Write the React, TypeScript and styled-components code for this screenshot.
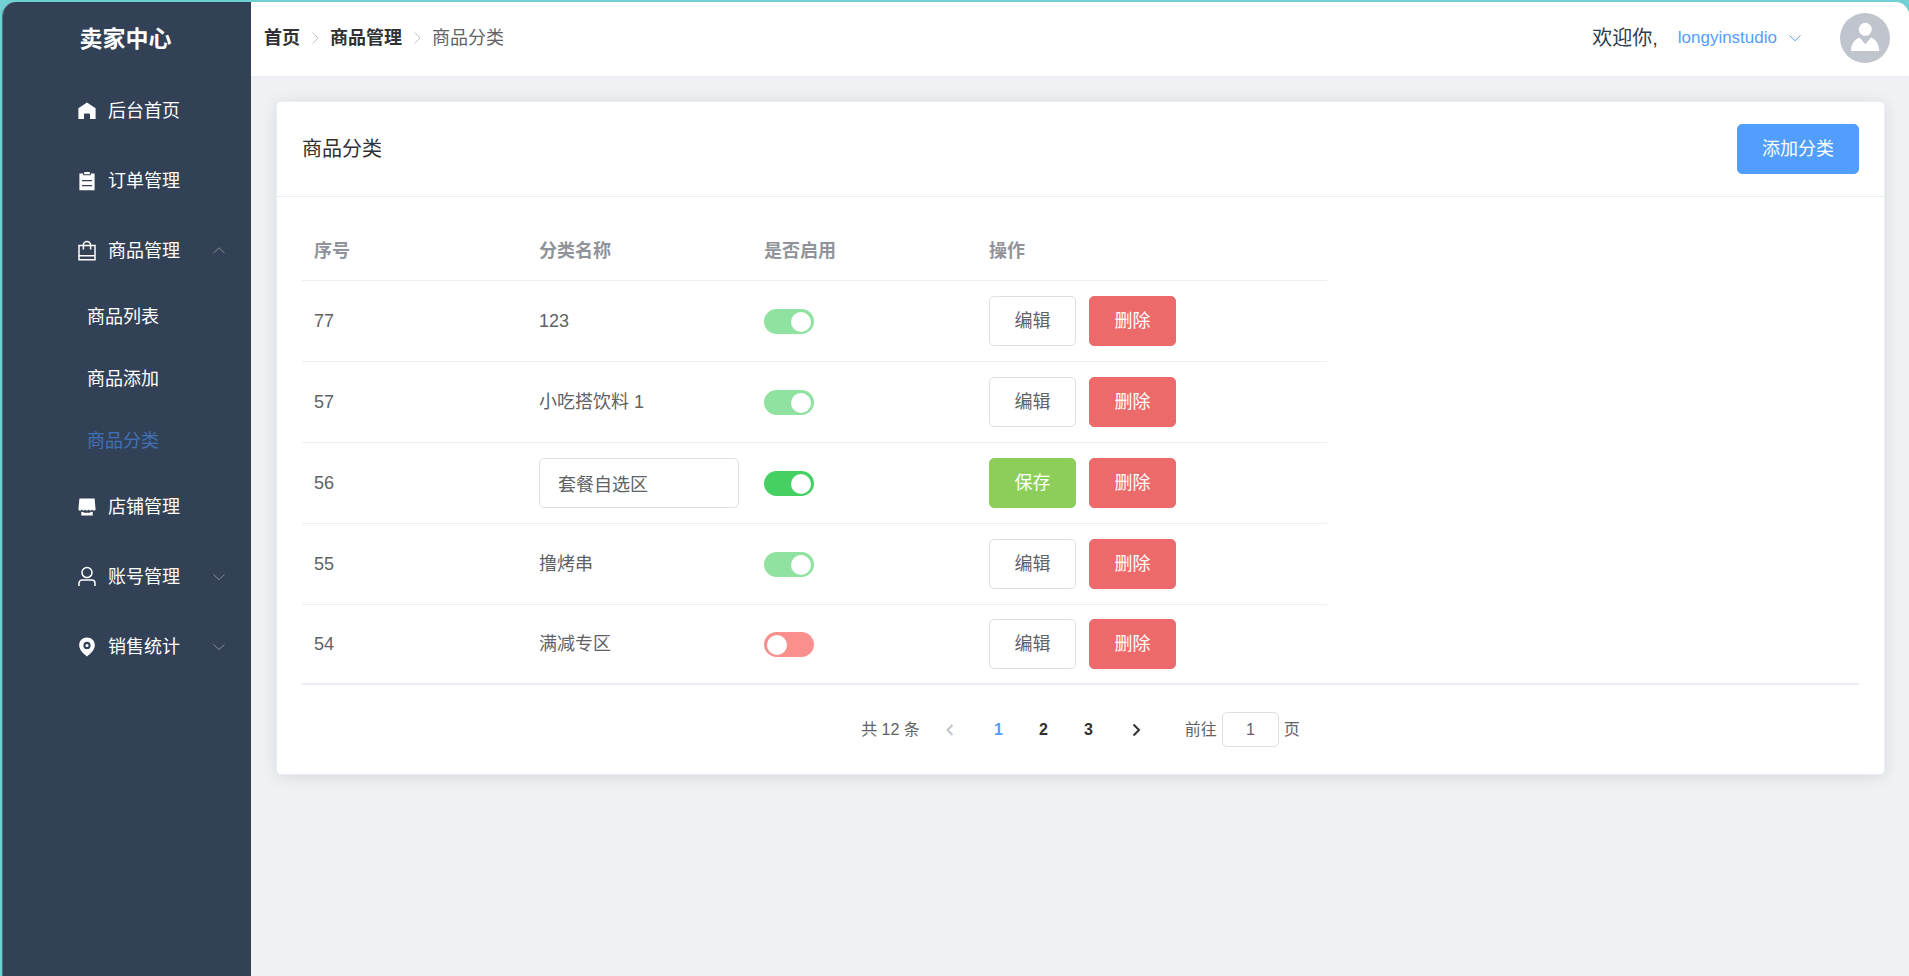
import React, { useState } from 'react';
import styled, { createGlobalStyle, css } from 'styled-components';

const GlobalStyle = createGlobalStyle`
  *, *::before, *::after { box-sizing: border-box; }
  body {
    margin: 0;
    background: #70d1d2;
    color: #303133;
    font-family: "Liberation Sans", "Noto Sans CJK SC", sans-serif;
    font-size: 18px;
    line-height: 24px;
  }
  button, input { font: inherit; }
  h1, h2, ul, ol { margin: 0; padding: 0; }
  ul, ol { list-style: none; }
  a { color: inherit; text-decoration: none; }
`;

const Desktop = styled.div`
  min-height: 100vh;
  padding: 2px 0 0 2px;
  display: flex;
`;

const AppWindow = styled.div`
  flex: 1;
  min-width: 0;
  display: flex;
  border-left: 1px solid #43707f;
  border-radius: 14px 14px 0 0;
  overflow: hidden;
  background: #f0f1f5;
`;

const Sidebar = styled.aside`
  flex: 0 0 248px;
  background: #334157;
  color: #fff;
`;

const Brand = styled.h1`
  height: 74px;
  padding-right: 3px;
  display: flex;
  align-items: center;
  justify-content: center;
  font-size: 23px;
`;

const menuRow = css`
  width: 100%;
  height: 70px;
  padding: 0 25px 0 72px;
  display: flex;
  align-items: center;
  gap: 9px;
  border: 0;
  background: none;
  color: #fff;
  cursor: pointer;
`;

const MenuLink = styled.a`
  ${menuRow}
`;

const MenuToggle = styled.button`
  ${menuRow}
`;

const MenuLabel = styled.span`
  flex: 1;
  text-align: left;
`;

const SubLink = styled.a<{ $active?: boolean }>`
  height: 62px;
  padding-left: 84px;
  display: flex;
  align-items: center;
  color: ${(p) => (p.$active ? '#3f71b5' : '#fff')};
`;

const Content = styled.div`
  flex: 1;
  min-width: 0;
`;

const TopBar = styled.header`
  height: 75px;
  padding: 0 19px 2px 13px;
  display: flex;
  align-items: center;
  justify-content: space-between;
  background: #fff;
  border-bottom: 1px solid #ebecf0;
`;

const Crumbs = styled.ol`
  display: flex;
  align-items: center;
`;

const Crumb = styled.li`
  display: flex;
  align-items: center;
  color: #606266;

  a {
    font-weight: 700;
    color: #303133;
  }

  svg {
    margin: 0 8px;
  }
`;

const UserArea = styled.div`
  display: flex;
  align-items: center;
`;

const Greeting = styled.span`
  font-size: 20px;
  color: #2c3e50;
  margin-right: 20px;
`;

const UserMenu = styled.button`
  padding: 0;
  margin-right: 38px;
  display: flex;
  align-items: center;
  gap: 11px;
  border: 0;
  background: none;
  color: #529eff;
  font-size: 17px;
  cursor: pointer;
`;

const Main = styled.main`
  padding: 24px 24px 24px 25px;
`;

const Card = styled.section`
  background: #fff;
  border: 1px solid #ebeef5;
  border-radius: 5px;
  box-shadow: 0 2px 15px rgba(0, 0, 0, 0.1);
`;

const CardHeader = styled.div`
  padding: 22px 25px;
  display: flex;
  align-items: center;
  justify-content: space-between;
  border-bottom: 1px solid #ebeef5;
`;

const CardTitle = styled.h2`
  font-size: 20px;
  font-weight: 400;
`;

const CardBody = styled.div`
  padding: 25px 25px 27px;
`;

const tones = {
  plain: ['#fff', '#dcdfe6', '#606266'],
  primary: ['#529eff', '#529eff', '#fff'],
  success: ['#8dce5b', '#8dce5b', '#fff'],
  danger: ['#ec6a6a', '#ec6a6a', '#fff'],
};

const Button = styled.button<{ $tone: keyof typeof tones }>`
  height: 50px;
  padding: 0 24px;
  background: ${(p) => tones[p.$tone][0]};
  border: 1px solid ${(p) => tones[p.$tone][1]};
  border-radius: 5px;
  color: ${(p) => tones[p.$tone][2]};
  cursor: pointer;
`;

const Table = styled.table`
  width: 1025px;
  max-width: 100%;
  table-layout: fixed;
  border-collapse: separate;
  border-spacing: 0;
  color: #606266;

  th, td {
    padding: 0 12px;
    text-align: left;
    border-bottom: 1px solid #ebeef5;
  }
  th {
    width: 225px;
    height: 59px;
    color: #909399;
  }
  th:last-child {
    width: 350px;
  }
  td {
    height: 81px;
  }
  tbody tr:last-child td {
    height: 78px;
    border-bottom: 0;
  }
`;

const NameInput = styled.input`
  width: 200px;
  height: 50px;
  padding: 0 18px;
  display: block;
  border: 1px solid #dcdfe6;
  border-radius: 5px;
  background: #fff;
  color: #606266;
`;

const Switch = styled.input`
  appearance: none;
  width: 50px;
  height: 25px;
  margin: 1px 0 0;
  padding: 0 3px;
  display: flex;
  align-items: center;
  border-radius: 13px;
  background: #ff4949;
  cursor: pointer;

  &::before {
    content: '';
    width: 20px;
    height: 20px;
    border-radius: 50%;
    background: #fff;
  }
  &:checked {
    justify-content: flex-end;
    background: #45d064;
  }
  &:disabled {
    background: #f9908e;
    cursor: not-allowed;
  }
  &:checked:disabled {
    background: #8fe2a0;
  }
`;

const Actions = styled.div`
  display: flex;
  gap: 13px;

  button {
    width: 87px;
    padding: 0;
  }
`;

const Divider = styled.hr`
  height: 2px;
  margin: 0 0 27px;
  border: 0;
  background: #ebeef5;
`;

const Pagination = styled.nav`
  display: flex;
  align-items: center;
  justify-content: center;
  font-size: 16px;
  color: #606266;
`;

const Total = styled.span`
  margin-right: 12px;
`;

const PageList = styled.ul`
  margin: 0 7px;
  display: flex;
`;

const PagerButton = styled.button<{ $current?: boolean; $arrow?: boolean }>`
  width: ${(p) => (p.$arrow ? 37 : 45)}px;
  height: 35px;
  padding: 0;
  display: flex;
  align-items: center;
  justify-content: center;
  border: 0;
  background: none;
  font-weight: 700;
  color: ${(p) => (p.$current ? '#529eff' : '#303133')};
  cursor: pointer;

  &:disabled {
    color: #c0c4cc;
  }
`;

const Jump = styled.label`
  margin-left: 30px;
  display: flex;
  align-items: center;
  gap: 5px;

  input {
    width: 57px;
    height: 35px;
    padding: 0;
    border: 1px solid #dcdfe6;
    border-radius: 5px;
    color: #606266;
    text-align: center;
  }
`;

type Direction = 'up' | 'down' | 'left' | 'right';

const chevrons: Record<Direction, string> = {
  up: 'M1.5 9 7 3.8 12.5 9',
  down: 'M1.5 4.5 7 9.7 12.5 4.5',
  left: 'M9.5 2 4.5 7 9.5 12',
  right: 'M4.5 1.5 10 7 4.5 12.5',
};

function Chevron({ to, color = 'currentColor', weight = 1 }: { to: Direction; color?: string; weight?: number }) {
  return (
    <svg width="14" height="14" viewBox="0 0 14 14" fill="none" stroke={color} strokeWidth={weight} aria-hidden="true">
      <path d={chevrons[to]} />
    </svg>
  );
}

const glyphs = {
  home: (
    <path
      fill="currentColor"
      d="M3.4 9.2 12 3.4l8.600 5.800V20h-5.600v-4.600a1 1 0 0 0-1-1H10a1 1 0 0 0-1 1V20H3.400z"
    />
  ),
  order: (
    <>
      <path fill="currentColor" d="M4.4 4.6h3.8v1.6h7.6V4.6h3.8v16.6H4.4z" />
      <path fill="currentColor" d="M9.2 3h5.6v2.2H9.2z" />
      <path stroke="#334157" strokeWidth="1.2" d="M7 11.6h10M7 16.6h10" />
    </>
  ),
  goods: (
    <g fill="none" stroke="currentColor" strokeWidth="1.5">
      <path d="M4 6.6h16v14.200H4zM4 16.800h16" />
      <path d="M8.4 10.4V6a3.600 3.600 0 0 1 7.200 0v4.400" />
    </g>
  ),
  shop: (
    <>
      <path
        fill="currentColor"
        d="M4.400 3.400h15.200l1 11.200c-.4 1.500-2.800 1.500-3.440 0-.64 1.500-2.800 1.500-3.440 0-.64 1.500-2.800 1.500-3.440 0-.64 1.500-2.800 1.500-3.440 0-.64 1.500-3.040 1.500-3.440 0z"
      />
      <path fill="currentColor" d="M6.300 16.800c1 .4 2.100.1 3 1h5.400c.9-.9 2-.6 3-1v3.600H6.300z" />
    </>
  ),
  user: (
    <g fill="none" stroke="currentColor" strokeWidth="1.5">
      <circle cx="12" cy="7.6" r="5" />
      <path d="M4 21v-2.800A3.200 3.200 0 0 1 7.200 15h9.600a3.200 3.200 0 0 1 3.200 3.200V21" />
    </g>
  ),
  location: (
    <>
      <path
        fill="currentColor"
        fillRule="evenodd"
        d="M12 2.600c4.500 0 7.800 3.300 7.800 7.600 0 3.800-3 7.600-7.800 11.200-4.800-3.600-7.800-7.400-7.800-11.200 0-4.300 3.300-7.600 7.800-7.600zm0 4.200a3.600 3.600 0 1 0 0 7.200 3.600 3.600 0 0 0 0-7.200z"
      />
      <circle cx="12" cy="10.4" r="1.5" fill="currentColor" />
    </>
  ),
};

function MenuIcon({ name }: { name: keyof typeof glyphs }) {
  return (
    <svg width="24" height="24" viewBox="0 0 24 24" aria-hidden="true">
      {glyphs[name]}
    </svg>
  );
}

function Avatar() {
  return (
    <svg width="50" height="50" viewBox="0 0 50 50" role="img" aria-label="用户头像">
      <circle cx="25" cy="25" r="25" fill="#c0c4cc" />
      <circle cx="25.3" cy="16.3" r="6.5" fill="#fff" />
      <path fill="#fff" d="M11 38c0-6.500 3-11.300 8.500-13.600l5.800 6.800 5.800-6.800C36.400 26.700 39.200 31.500 39.200 38z" />
    </svg>
  );
}

const initialRows = [
  { id: 77, name: '123', enabled: true, editing: false },
  { id: 57, name: '小吃搭饮料 1', enabled: true, editing: false },
  { id: 56, name: '套餐自选区', enabled: true, editing: true },
  { id: 55, name: '撸烤串', enabled: true, editing: false },
  { id: 54, name: '满减专区', enabled: false, editing: false },
];

type Row = (typeof initialRows)[number];

function SideMenu() {
  const [open, setOpen] = useState(true);
  return (
    <nav aria-label="主菜单">
      <ul>
        <li><MenuLink href="#home"><MenuIcon name="home" /><MenuLabel>后台首页</MenuLabel></MenuLink></li>
        <li><MenuLink href="#orders"><MenuIcon name="order" /><MenuLabel>订单管理</MenuLabel></MenuLink></li>
        <li>
          <MenuToggle type="button" aria-expanded={open} onClick={() => setOpen(!open)}>
            <MenuIcon name="goods" />
            <MenuLabel>商品管理</MenuLabel>
            <Chevron to={open ? 'up' : 'down'} color="#868b94" />
          </MenuToggle>
          {open && (
            <ul>
              <li><SubLink href="#list">商品列表</SubLink></li>
              <li><SubLink href="#add">商品添加</SubLink></li>
              <li><SubLink href="#category" $active aria-current="page">商品分类</SubLink></li>
            </ul>
          )}
        </li>
        <li><MenuLink href="#shop"><MenuIcon name="shop" /><MenuLabel>店铺管理</MenuLabel></MenuLink></li>
        <li>
          <MenuToggle type="button" aria-expanded={false}>
            <MenuIcon name="user" />
            <MenuLabel>账号管理</MenuLabel>
            <Chevron to="down" color="#868b94" />
          </MenuToggle>
        </li>
        <li>
          <MenuToggle type="button" aria-expanded={false}>
            <MenuIcon name="location" />
            <MenuLabel>销售统计</MenuLabel>
            <Chevron to="down" color="#868b94" />
          </MenuToggle>
        </li>
      </ul>
    </nav>
  );
}

export default function App() {
  const [rows, setRows] = useState<Row[]>(initialRows);
  const [page, setPage] = useState(1);

  const update = (id: number, change: Partial<Row>) =>
    setRows(rows.map((row) => (row.id === id ? { ...row, ...change } : row)));

  return (
    <Desktop>
      <GlobalStyle />
      <AppWindow>
        <Sidebar>
          <Brand>卖家中心</Brand>
          <SideMenu />
        </Sidebar>
        <Content>
          <TopBar>
            <nav aria-label="面包屑">
              <Crumbs>
                <Crumb><a href="#home">首页</a><Chevron to="right" color="#c0c4cc" /></Crumb>
                <Crumb><a href="#goods">商品管理</a><Chevron to="right" color="#c0c4cc" /></Crumb>
                <Crumb aria-current="page">商品分类</Crumb>
              </Crumbs>
            </nav>
            <UserArea>
              <Greeting>欢迎你,</Greeting>
              <UserMenu type="button">longyinstudio<Chevron to="down" /></UserMenu>
              <Avatar />
            </UserArea>
          </TopBar>
          <Main>
            <Card>
              <CardHeader>
                <CardTitle>商品分类</CardTitle>
                <Button type="button" $tone="primary">添加分类</Button>
              </CardHeader>
              <CardBody>
                <Table>
                  <thead>
                    <tr>
                      <th scope="col">序号</th>
                      <th scope="col">分类名称</th>
                      <th scope="col">是否启用</th>
                      <th scope="col">操作</th>
                    </tr>
                  </thead>
                  <tbody>
                    {rows.map((row) => (
                      <tr key={row.id}>
                        <td>{row.id}</td>
                        <td>
                          {row.editing ? (
                            <NameInput
                              type="text"
                              aria-label="分类名称"
                              value={row.name}
                              onChange={(e) => update(row.id, { name: e.target.value })}
                            />
                          ) : (
                            row.name
                          )}
                        </td>
                        <td>
                          <Switch
                            type="checkbox"
                            role="switch"
                            aria-label="是否启用"
                            checked={row.enabled}
                            disabled={!row.editing}
                            onChange={(e) => update(row.id, { enabled: e.target.checked })}
                          />
                        </td>
                        <td>
                          <Actions>
                            <Button
                              type="button"
                              $tone={row.editing ? 'success' : 'plain'}
                              onClick={() => update(row.id, { editing: !row.editing })}
                            >
                              {row.editing ? '保存' : '编辑'}
                            </Button>
                            <Button
                              type="button"
                              $tone="danger"
                              onClick={() => setRows(rows.filter((r) => r.id !== row.id))}
                            >
                              删除
                            </Button>
                          </Actions>
                        </td>
                      </tr>
                    ))}
                  </tbody>
                </Table>
                <Divider />
                <Pagination aria-label="分页">
                  <Total>共 12 条</Total>
                  <PagerButton type="button" $arrow aria-label="上一页" disabled={page === 1} onClick={() => setPage(page - 1)}>
                    <Chevron to="left" weight={2} />
                  </PagerButton>
                  <PageList>
                    {[1, 2, 3].map((n) => (
                      <li key={n}>
                        <PagerButton type="button" $current={n === page} onClick={() => setPage(n)}>{n}</PagerButton>
                      </li>
                    ))}
                  </PageList>
                  <PagerButton type="button" $arrow aria-label="下一页" disabled={page === 3} onClick={() => setPage(page + 1)}>
                    <Chevron to="right" weight={2} />
                  </PagerButton>
                  <Jump>
                    前往
                    <input type="text" value={page} onChange={(e) => setPage(Number(e.target.value) || 1)} />
                    页
                  </Jump>
                </Pagination>
              </CardBody>
            </Card>
          </Main>
        </Content>
      </AppWindow>
    </Desktop>
  );
}
